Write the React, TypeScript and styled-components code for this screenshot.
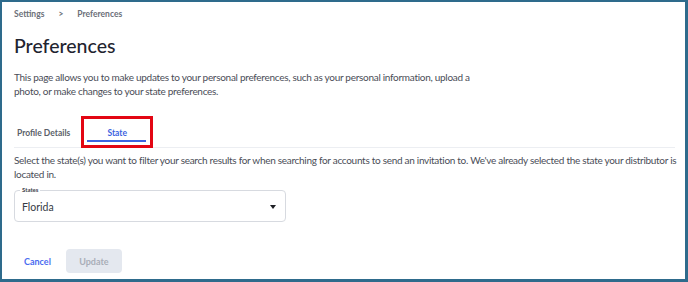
import React from 'react';
import styled, { createGlobalStyle } from 'styled-components';

const GlobalStyle = createGlobalStyle`
  html, body {
    margin: 0;
    padding: 0;
    background: #ffffff;
  }
  body {
    font-family: Lato, "Open Sans", sans-serif;
    color: #363b45;
  }
`;

const Frame = styled.div`
  box-sizing: border-box;
  width: 688px;
  height: 282px;
  border-style: solid;
  border-color: #2e6b8c;
  border-width: 2px 3px 3px 2px;
  background: #ffffff;
  overflow: hidden;
`;

const Page = styled.div`
  padding: 6px 4px 0 12px;
  display: flex;
  flex-direction: column;
`;

const Breadcrumb = styled.nav`
  display: flex;
  align-items: center;
  gap: 14px;
  font-size: 8.5px;
  font-weight: 700;
  color: #6b6f78;
  height: 12px;
  line-height: 12px;
`;

const Title = styled.h1`
  margin: 12px 0 0 0;
  font-size: 19.5px;
  font-weight: 500;
  color: #1f2430;
  line-height: 28px;
`;

const Text = styled.p<{ $top: number }>`
  margin: ${(p) => p.$top}px 0 0 0;
  font-size: 10px;
  line-height: 14px;
  letter-spacing: -0.29px;
  color: #4a4d57;
`;

const TabBar = styled.div`
  margin-top: 18px;
  margin-right: 6px;
  display: flex;
  align-items: flex-start;
  border-bottom: 1px solid #eceef2;
  height: 31px;
`;

const Tab = styled.button<{ $active?: boolean }>`
  position: relative;
  box-sizing: border-box;
  background: none;
  border: 3px solid transparent;
  font-family: inherit;
  font-size: 8.5px;
  font-weight: 700;
  line-height: 12px;
  color: ${(p) => (p.$active ? '#3d63e0' : '#5b5f69')};
  padding: 1px 0 0 0;
  height: 32px;
  cursor: pointer;
  text-align: left;

  &::after {
    content: '';
    display: ${(p) => (p.$active ? 'block' : 'none')};
    position: absolute;
    left: 3px;
    right: 4px;
    bottom: 3px;
    height: 2px;
    background: #3d63e0;
  }
`;

const MarkedTab = styled(Tab)`
  width: 72px;
  margin-left: 8px;
  border-color: #e30613;
  text-align: center;
  padding-left: 0;
`;

const SelectBox = styled.div`
  position: relative;
  margin-top: 9px;
  box-sizing: border-box;
  width: 272px;
  height: 32px;
  border: 1px solid #d7dae0;
  border-radius: 4px;
  display: flex;
  align-items: center;
  justify-content: space-between;
  padding: 0 9px 0 7px;
`;

const SelectLabel = styled.span`
  position: absolute;
  top: -5px;
  left: 5px;
  padding: 0 2px;
  background: #ffffff;
  font-size: 6px;
  line-height: 8px;
  font-weight: 700;
  color: #3f434c;
`;

const SelectValue = styled.span`
  font-size: 10.5px;
  color: #363b45;
  margin-top: 2px;
`;

const Caret = styled.span`
  width: 0;
  height: 0;
  border-left: 3.5px solid transparent;
  border-right: 3.5px solid transparent;
  border-top: 4px solid #1d1f24;
  margin-top: 1px;
`;

const Actions = styled.div`
  margin-top: 27px;
  display: flex;
  align-items: center;
  gap: 15px;
  padding-left: 10px;
`;

const LinkButton = styled.button`
  background: none;
  border: none;
  padding: 0;
  font-family: inherit;
  font-size: 9px;
  font-weight: 700;
  color: #4a6cf0;
  cursor: pointer;
`;

const DisabledButton = styled.button`
  width: 56px;
  height: 24px;
  border: none;
  border-radius: 4px;
  background: #e4e8ef;
  color: #a9aeb8;
  font-family: inherit;
  font-size: 9px;
  font-weight: 700;
`;

const App: React.FC = () => {
  return (
    <>
      <GlobalStyle />
      <Frame>
        <Page>
          <Breadcrumb>
            <span>Settings</span>
            <span>&gt;</span>
            <span>Preferences</span>
          </Breadcrumb>
          <Title>Preferences</Title>
          <Text $top={10}>
            This page allows you to make updates to your personal preferences, such as your personal information, upload a
            <br />
            photo, or make changes to your state preferences.
          </Text>
          <TabBar>
            <Tab>Profile Details</Tab>
            <MarkedTab $active>State</MarkedTab>
          </TabBar>
          <Text $top={5}>
            Select the state(s) you want to filter your search results for when searching for accounts to send an invitation to. We've already selected the state your distributor is located in.
          </Text>
          <SelectBox>
            <SelectLabel>States</SelectLabel>
            <SelectValue>Florida</SelectValue>
            <Caret />
          </SelectBox>
          <Actions>
            <LinkButton>Cancel</LinkButton>
            <DisabledButton disabled>Update</DisabledButton>
          </Actions>
        </Page>
      </Frame>
    </>
  );
};

export default App;
